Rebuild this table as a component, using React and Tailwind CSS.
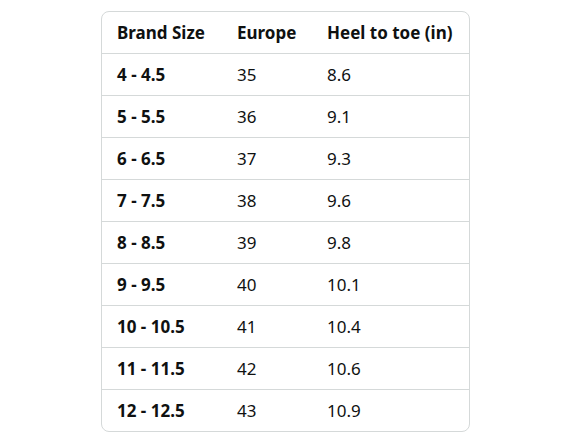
const rows = [
  ["4 - 4.5", "35", "8.6"],
  ["5 - 5.5", "36", "9.1"],
  ["6 - 6.5", "37", "9.3"],
  ["7 - 7.5", "38", "9.6"],
  ["8 - 8.5", "39", "9.8"],
  ["9 - 9.5", "40", "10.1"],
  ["10 - 10.5", "41", "10.4"],
  ["11 - 11.5", "42", "10.6"],
  ["12 - 12.5", "43", "10.9"],
];

export default function App() {
  return (
    <div
      className="w-[588px] h-[441px] bg-white flex pl-[101px] pt-[11px]"
      style={{ fontFamily: '"Noto Sans", Arial, sans-serif' }}
    >
      <div className="w-[369px] h-[421px] border border-[#d5d9d9] rounded-lg overflow-hidden text-[#0f1111] text-[17px]">
        <div className="grid grid-cols-[120px_90px_1fr] h-[42px] items-center font-bold border-b border-[#d5d9d9]">
          <div className="pl-[15px]">Brand Size</div>
          <div className="pl-[15px]">Europe</div>
          <div className="pl-[15px]">Heel to toe (in)</div>
        </div>
        {rows.map((r, i) => (
          <div
            key={i}
            className={
              "grid grid-cols-[120px_90px_1fr] h-[42px] items-center" +
              (i < rows.length - 1 ? " border-b border-[#d5d9d9]" : "")
            }
          >
            <div className="pl-[15px] font-bold">{r[0]}</div>
            <div className="pl-[15px]">{r[1]}</div>
            <div className="pl-[15px]">{r[2]}</div>
          </div>
        ))}
      </div>
    </div>
  );
}
